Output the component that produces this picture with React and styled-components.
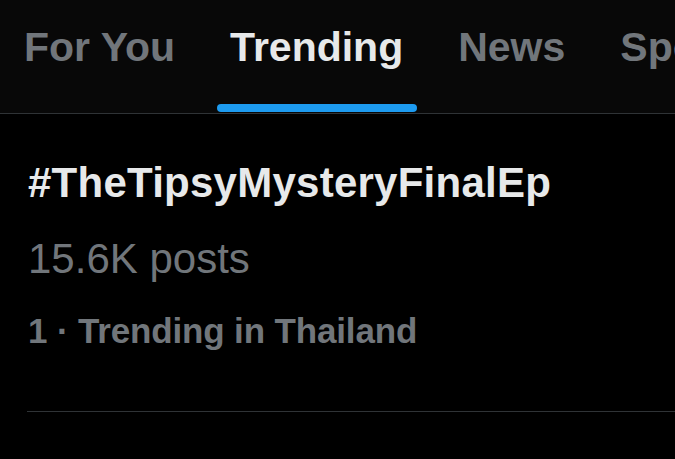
import React from "react";
import styled, { createGlobalStyle } from "styled-components";

const Global = createGlobalStyle`
  html, body {
    margin: 0;
    padding: 0;
    background: #000;
  }
  body {
    font-family: "Liberation Sans", Arial, sans-serif;
    width: 675px;
    height: 459px;
    overflow: hidden;
  }
`;

const tabs = ["For You", "Trending", "News", "Sports"];

const App = () => {
  return (
    <>
      <Global />
      <Page>
        <TabBar>
          {tabs.map((t) => (
            <Tab key={t}>
              <TabLabel active={t === "Trending"}>{t}</TabLabel>
              <Indicator active={t === "Trending"} />
            </Tab>
          ))}
        </TabBar>

        <TrendItem>
          <Hashtag>#TheTipsyMysteryFinalEp</Hashtag>
          <Posts>15.6K posts</Posts>
          <Meta>1 · Trending in Thailand</Meta>
        </TrendItem>
        <Divider />
      </Page>
    </>
  );
};

const Page = styled.div`
  width: 675px;
  height: 459px;
  background: #000;
  overflow: hidden;
`;

const TabBar = styled.div`
  display: flex;
  gap: 28px;
  height: 113px;
  padding-left: 11px;
  background: #080808;
  border-bottom: 1px solid #2f3336;
  white-space: nowrap;
  overflow: hidden;
`;

const Tab = styled.div`
  display: flex;
  flex-direction: column;
  align-items: stretch;
  padding: 23px 0 0;
  flex-shrink: 0;
`;

const TabLabel = styled.div`
  padding: 0 14px 0 13px;
  font-size: 41px;
  line-height: 48px;
  font-weight: 700;
  color: ${(p) => (p.active ? "#e7e9ea" : "#71767b")};
`;

const Indicator = styled.div`
  margin-top: 33px;
  height: 8px;
  border-radius: 4px;
  background: ${(p) => (p.active ? "#1d9bf0" : "transparent")};
`;

const TrendItem = styled.div`
  display: flex;
  flex-direction: column;
  padding: 44px 0 0 28px;
`;

const Hashtag = styled.div`
  font-size: 42px;
  line-height: 50px;
  font-weight: 700;
  letter-spacing: 0.25px;
  color: #e7e9ea;
`;

const Posts = styled.div`
  margin-top: 26px;
  font-size: 42px;
  line-height: 50px;
  font-weight: 400;
  color: #71767b;
`;

const Meta = styled.div`
  margin-top: 26px;
  font-size: 35px;
  line-height: 42px;
  font-weight: 700;
  letter-spacing: -0.15px;
  color: #71767b;
`;

const Divider = styled.div`
  margin: 59px 0 0 27px;
  border-top: 1px solid #2f3336;
`;

export default App;
